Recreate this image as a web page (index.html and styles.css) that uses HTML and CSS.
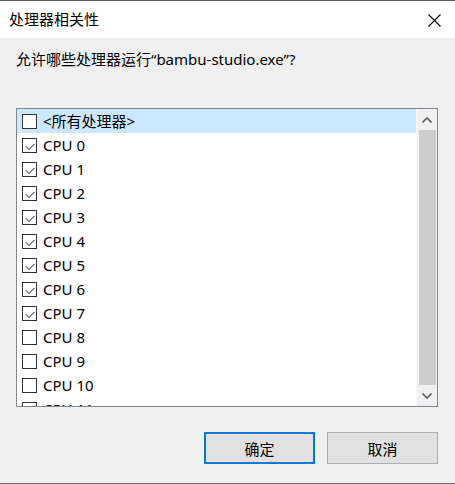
FILE: index.html
```html
<!DOCTYPE html>
<html lang="zh-CN">
<head>
    <meta charset="UTF-8">
    <title>处理器相关性</title>
    <link rel="stylesheet" href="styles.css">
</head>
<body>
    <div class="window">
        <div class="titlebar">
            <span class="title">处理器相关性</span>
            <svg class="close" width="13" height="13" viewBox="0 0 13 13">
                <path d="M0.5 0.5 L12.5 12.5 M12.5 0.5 L0.5 12.5" stroke="#000" stroke-width="1.1" fill="none"/>
            </svg>
        </div>

        <div class="content">
            <p class="prompt">允许哪些处理器运行“bambu-studio.exe”?</p>

            <div class="listbox">
                <div class="rows">
                    <div class="row selected"><span class="box"></span>&lt;所有处理器&gt;</div>
                    <div class="row"><span class="box checked"></span>CPU 0</div>
                    <div class="row"><span class="box checked"></span>CPU 1</div>
                    <div class="row"><span class="box checked"></span>CPU 2</div>
                    <div class="row"><span class="box checked"></span>CPU 3</div>
                    <div class="row"><span class="box checked"></span>CPU 4</div>
                    <div class="row"><span class="box checked"></span>CPU 5</div>
                    <div class="row"><span class="box checked"></span>CPU 6</div>
                    <div class="row"><span class="box checked"></span>CPU 7</div>
                    <div class="row"><span class="box"></span>CPU 8</div>
                    <div class="row"><span class="box"></span>CPU 9</div>
                    <div class="row"><span class="box"></span>CPU 10</div>
                    <div class="row"><span class="box"></span>CPU 11</div>
                </div>
                <div class="scrollbar">
                    <div class="arrow">
                        <svg width="10" height="6" viewBox="0 0 10 6"><path d="M0.5 5.5 L5 1 L9.5 5.5" stroke="#606060" stroke-width="1.6" fill="none"/></svg>
                    </div>
                    <div class="thumb"></div>
                    <div class="arrow">
                        <svg width="10" height="6" viewBox="0 0 10 6"><path d="M0.5 0.5 L5 5 L9.5 0.5" stroke="#606060" stroke-width="1.6" fill="none"/></svg>
                    </div>
                </div>
            </div>

            <div class="buttons">
                <button class="btn default">确定</button>
                <button class="btn">取消</button>
            </div>
        </div>
    </div>
</body>
</html>
```

FILE: styles.css
```css
* {
    box-sizing: border-box;
    margin: 0;
    padding: 0;
}

body {
    font-family: "Noto Sans", "Noto Sans CJK SC", sans-serif;
    font-size: 15px;
    color: #000;
    background-color: #f0f0f0;
}

.window {
    width: 455px;
    height: 484px;
    display: flex;
    flex-direction: column;
    background-color: #f0f0f0;
    border-top: 1px solid #5a5a5a;
    border-bottom: 1px solid #6e6e6e;
}

.titlebar {
    height: 37px;
    background-color: white;
    display: flex;
    align-items: center;
    justify-content: space-between;
    padding: 0 14px 0 9px;
}

.title {
    font-size: 15px;
    line-height: 20px;
    margin-top: -1px;
}

.close {
    display: block;
    margin-top: 1px;
}

.content {
    flex: 1;
    display: flex;
    flex-direction: column;
    padding: 11px 17px 0 16px;
}

.prompt {
    line-height: 20px;
    height: 20px;
    margin-bottom: 39px;
}

.listbox {
    height: 299px;
    border: 1px solid #828790;
    background-color: white;
    display: flex;
    overflow: hidden;
}

.rows {
    flex: 1;
    overflow: hidden;
}

.row {
    height: 24px;
    display: flex;
    align-items: center;
    padding-left: 5px;
    gap: 6px;
    line-height: 24px;
    white-space: nowrap;
}

.row.selected {
    background-color: #cce8ff;
}

.box {
    width: 15px;
    height: 15px;
    border: 1px solid #333;
    background-color: white;
    flex-shrink: 0;
    position: relative;
}

.row.selected .box {
    background-color: white;
}

.box.checked::after {
    content: "";
    position: absolute;
    left: 3px;
    top: 2px;
    width: 7px;
    height: 4px;
    border-left: 1px solid #555;
    border-bottom: 1px solid #555;
    transform: translate(0, 2px) rotate(-45deg);
    transform-origin: center;
}

.scrollbar {
    width: 21px;
    background-color: #f0f0f0;
    border-left: 1px solid #f4f9ff;
    display: flex;
    flex-direction: column;
}

.arrow {
    height: 21px;
    display: flex;
    align-items: center;
    justify-content: center;
}

.arrow svg {
    display: block;
}

.thumb {
    flex: 1;
    margin: 0 1px 0 2px;
    background-color: #cdcdcd;
}

.buttons {
    display: flex;
    justify-content: flex-end;
    gap: 12px;
    margin-top: 25px;
}

.btn {
    width: 111px;
    height: 32px;
    font-family: "Noto Sans CJK SC", sans-serif;
    font-size: 15px;
    color: #000;
    background-color: #e1e1e1;
    border: 1px solid #adadad;
}

.btn.default {
    border: 2px solid #0078d7;
}
```
